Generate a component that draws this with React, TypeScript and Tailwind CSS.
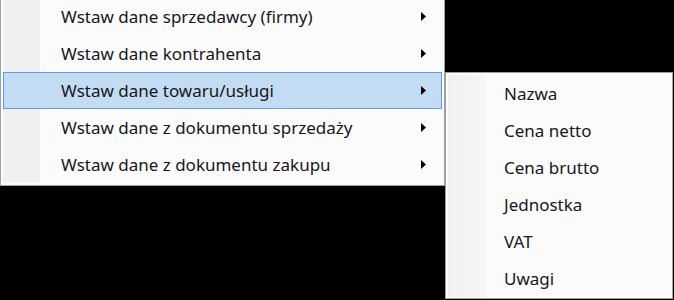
import React from "react";

const mainItems = [
  "Wstaw dane sprzedawcy (firmy)",
  "Wstaw dane kontrahenta",
  "Wstaw dane towaru/usługi",
  "Wstaw dane z dokumentu sprzedaży",
  "Wstaw dane z dokumentu zakupu",
];

const subItems = ["Nazwa", "Cena netto", "Cena brutto", "Jednostka", "VAT", "Uwagi"];

function Arrow() {
  return (
    <svg width="5" height="9" viewBox="0 0 5 9" className="shrink-0">
      <path d="M0 0 L5 4.5 L0 9 Z" fill="#000" />
    </svg>
  );
}

export default function App() {
  return (
    <div
      className="relative w-[674px] h-[300px] overflow-hidden bg-black text-[17px] text-[#18161c]"
      style={{ fontFamily: '"Noto Sans", "Open Sans", sans-serif' }}
    >
      {/* main menu */}
      <div className="absolute left-0 top-[-5px] w-[445px] border border-[#a0a0a0] bg-[#fbfbfb] p-[2px]">
        <div className="relative">
          <div className="absolute left-0 top-0 bottom-0 w-[38px] bg-[#f0f0f0] border-r border-[#fdfdfd]" />
          {mainItems.map((t, i) => (
            <div
              key={t}
              className={
                "relative flex h-[37px] items-center pl-[58px] pr-[16px] " +
                (i === 2 ? "bg-[#c3dcf3] outline outline-1 -outline-offset-1 outline-[#5a9ee0]" : "")
              }
            >
              <span className="flex-1 leading-none">{t}</span>
              <Arrow />
            </div>
          ))}
        </div>
      </div>

      {/* submenu */}
      <div className="absolute left-[445px] top-[72px] w-[228px] h-[227px] border border-[#a0a0a0] bg-[#fbfbfb] p-[2px]">
        <div className="relative">
          <div className="absolute left-0 top-0 bottom-0 w-[38px] bg-gradient-to-r from-[#f0f0f0] to-[#f6f6f6]" />
          {subItems.map((t) => (
            <div key={t} className="relative flex h-[37px] items-center pl-[56px]">
              <span className="leading-none">{t}</span>
            </div>
          ))}
        </div>
      </div>
    </div>
  );
}
